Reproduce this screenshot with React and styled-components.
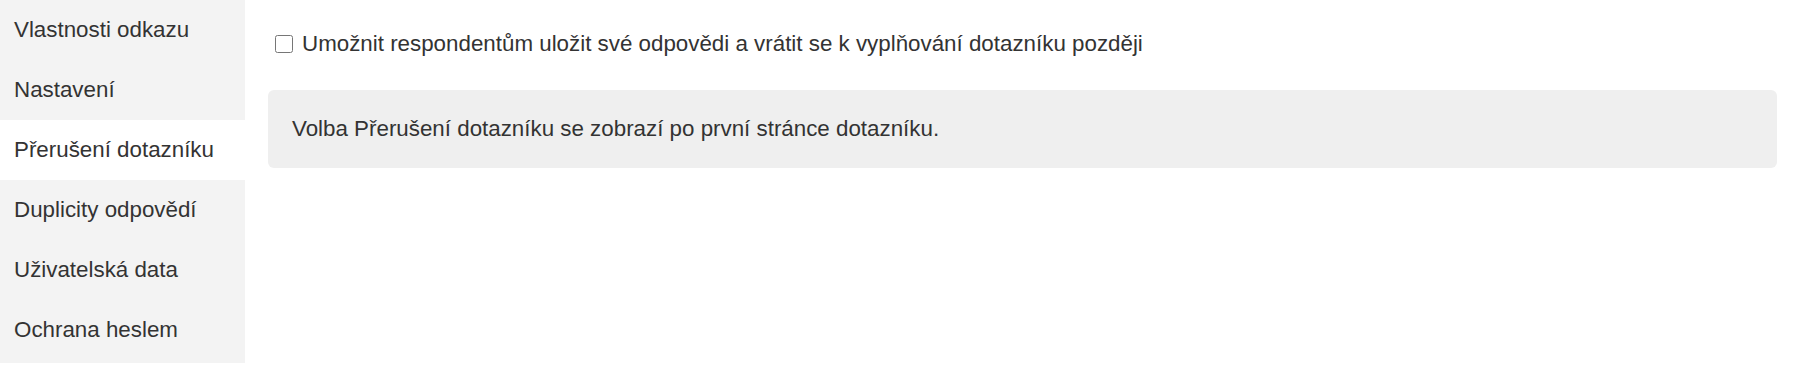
import React, { useState } from 'react'
import styled, { createGlobalStyle } from 'styled-components'

const GlobalStyle = createGlobalStyle`
  html, body {
    margin: 0;
    padding: 0;
    background: #fff;
  }
  body {
    font-family: "Liberation Sans", Arial, sans-serif;
    color: #333;
  }
`

const Page = styled.div`
  display: flex;
  width: 1795px;
  height: 365px;
  overflow: hidden;
`

const Sidebar = styled.nav`
  width: 245px;
  flex-shrink: 0;
  display: flex;
  flex-direction: column;
  background: #f3f3f3;
  height: 363px;
`

const NavItem = styled.div`
  height: 60px;
  display: flex;
  align-items: center;
  padding-left: 14px;
  font-size: 22.35px;
  color: #333;
  background: ${p => (p.$active ? '#fff' : 'transparent')};
  cursor: pointer;
`

const Content = styled.main`
  flex: 1;
  padding: 26px 18px 0 23px;
`

const CheckRow = styled.label`
  display: flex;
  align-items: center;
  height: 36px;
  padding-left: 7px;
  gap: 9px;
  font-size: 22.35px;
  color: #333;
  margin-bottom: 28px;
`

const Check = styled.input`
  width: 18px;
  height: 18px;
  margin: 0;
`

const InfoBox = styled.div`
  height: 78px;
  display: flex;
  align-items: center;
  padding: 0 24px;
  background: #efefef;
  border-radius: 6px;
  font-size: 22.35px;
  color: #333;
`

const items = [
  'Vlastnosti odkazu',
  'Nastavení',
  'Přerušení dotazníku',
  'Duplicity odpovědí',
  'Uživatelská data',
  'Ochrana heslem',
]

export default function App() {
  const [active, setActive] = useState(2)
  const [checked, setChecked] = useState(false)

  return (
    <>
      <GlobalStyle />
      <Page>
        <Sidebar>
          {items.map((item, i) => (
            <NavItem key={item} $active={i === active} onClick={() => setActive(i)}>
              {item}
            </NavItem>
          ))}
        </Sidebar>
        <Content>
          <CheckRow>
            <Check type="checkbox" checked={checked} onChange={e => setChecked(e.target.checked)} />
            Umožnit respondentům uložit své odpovědi a vrátit se k vyplňování dotazníku později
          </CheckRow>
          <InfoBox>Volba Přerušení dotazníku se zobrazí po první stránce dotazníku.</InfoBox>
        </Content>
      </Page>
    </>
  )
}
